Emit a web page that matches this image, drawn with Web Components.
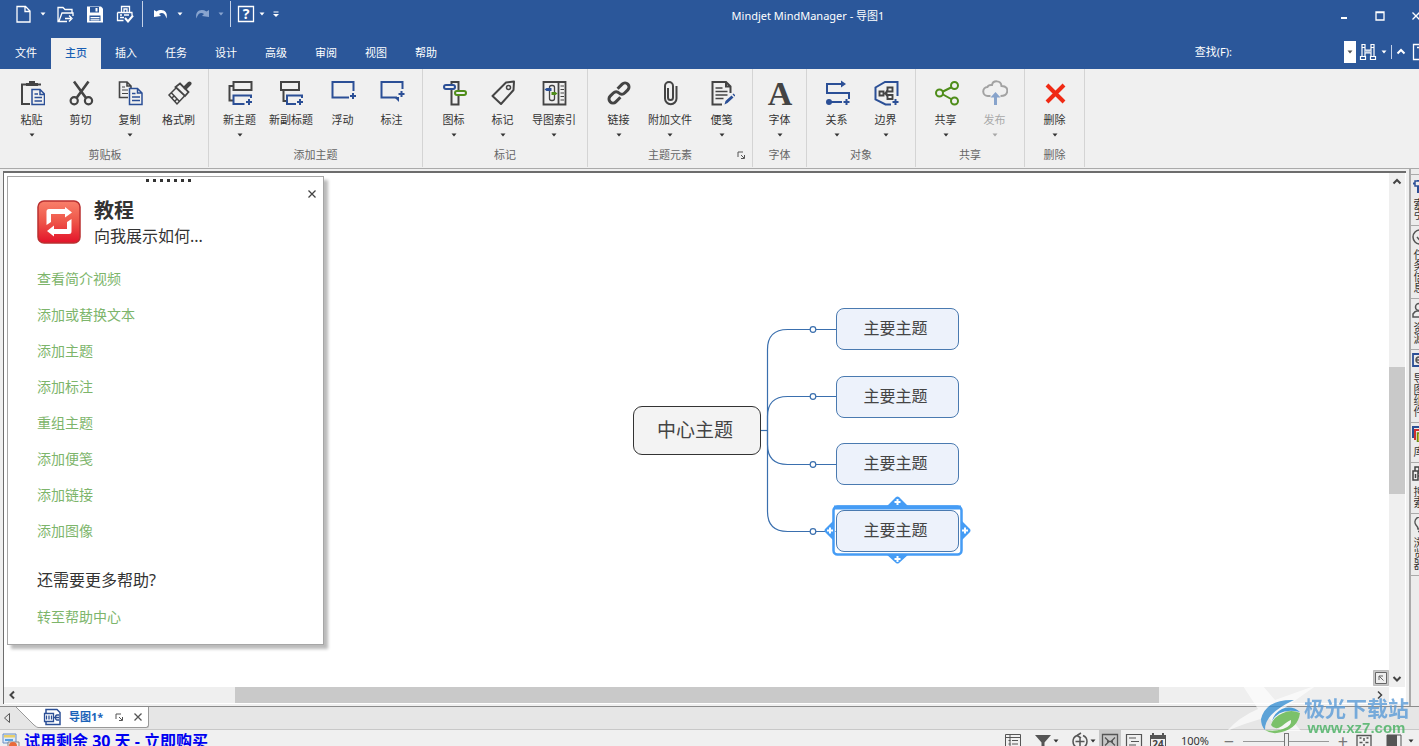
<!DOCTYPE html>
<html lang="zh-CN">
<head>
<meta charset="utf-8">
<title>Mindjet MindManager - 导图1</title>
<style>
  html, body { margin: 0; height: 100%; overflow: hidden; }
  body { font: 11px/16px "Noto Sans", "Noto Sans CJK SC", sans-serif; color: #333; background: #f0f0f0; }
</style>
</head>
<body>
<mm-shell></mm-shell>

<script>
const base = `*{box-sizing:border-box}button{font:inherit;color:inherit;background:none;border:0;padding:0;margin:0}a{text-decoration:none;color:inherit}`;

class Part extends HTMLElement {
  connectedCallback() {
    if (this.shadowRoot) return;
    const t = document.createElement('template');
    t.innerHTML = `<style>${base}${this.styles()}</style>${this.markup()}`;
    this.attachShadow({ mode: 'open' }).append(t.content.cloneNode(true));
  }
  styles() { return ':host{display:block}'; }
  markup() { return '<slot></slot>'; }
}

const K = '#444', B = '#2b4f96', G = '#4f8d1a';
const plus = (x, y, c = B) => `<path d="M${x - 3} ${y}h6M${x} ${y - 3}v6" stroke="${c}" stroke-width="2"/>`;

/* name: [view box size, drawing] */
const icons = {
  /* quick access */
  new: [18, `<path d="M2 1.500h8.500l4.500 4.500v11H2zM10 2v4.500h4.500" stroke="#fff" stroke-width="1.300"/>`],
  open: [18, `<path d="M3 16.500H2V2.500h5l2 2h7v3M3 16l3-8h11v3M3 16.500h8M9 13.500h6M13 10.500l3 3-3 3" stroke="#fff" stroke-width="1.300"/>`],
  save: [18, `<path d="M1 1.500h14l2 2v14H1z" fill="#fff"/><path d="M4 2h9v5.500H4zM3.500 10.500h11V16h-11z" fill="#2b579a"/><path d="M9.500 3h2v3.500h-2zM4.500 12h9v1.200h-9zM4.500 14.200h9v1.200h-9z" fill="#fff"/>`],
  print: [18, `<path d="M5.500 7V1.500h8V7M8 7V4h3v3M1.500 7.500h15M1.500 7.500v8h6M16 7.500v3M4 10h2M4 12.500h4M8 10h5" stroke="#fff" stroke-width="1.300"/><path d="M9 13l3 3.500 5-6" stroke="#fff" stroke-width="2"/>`],
  undo: [18, `<path d="M2 5v7l7-1-2-2c3-2 6-1 7.500 4.500C16.500 6 10 3 4.500 6.500z" fill="#fff"/>`],
  redo: [18, `<path d="M16 5v7l-7-1 2-2c-3-2-6-1-7.500 4.500C1.500 6 8 3 13.500 6.500z" fill="#88a4cf"/>`],
  help: [18, `<path d="M1.500 1.500h15v15h-15z" stroke="#fff" stroke-width="1.300"/><text x="9" y="14" text-anchor="middle" font-family="Noto Sans" font-weight="bold" font-size="14" fill="#fff">?</text>`],
  customize: [8, `<path d="M1.500 2h5" stroke="#fff"/><path d="M1 4h6L4 7z" fill="#fff"/>`],
  down: [8, `<path d="M1.500 2.500h5l-2.500 3z" fill="currentColor"/>`],
  min: [12, `<path d="M3 8h6" stroke="#fff" stroke-width="2"/>`],
  max: [12, `<path d="M2 2h8v8H2zM2 2.500h8" stroke="#fff" stroke-width="1.300"/>`],
  close: [12, `<path d="M2.500 2.500l7 7M9.500 2.500l-7 7" stroke="currentColor" stroke-width="1.300"/>`],
  find: [18, `<path d="M3 1.500h3v3H3zM12 1.500h3v3h-3zM3 4.500v9M6 4.500v9M12 4.500v9M15 4.500v9M6 7h6M6 10h6M1.500 13.500h5v3h-5zM11.500 13.500h5v3h-5zM8 7v3M10 7v3" stroke="#fff" stroke-width="1.200"/>`],
  up: [12, `<path d="M2.500 7.500L6 4l3.500 3.500" stroke="currentColor" stroke-width="2"/>`],
  panel: [18, `<path d="M1.500 1.500h15v15h-15zM5 4.500h4" stroke="#fff" stroke-width="1.300"/>`],
  /* ribbon */
  paste: [26, `<path d="M9 4.500H3V24h8M17 4.500h5" stroke="${K}" stroke-width="2"/><path d="M7 5V3h3V1h6v2h3v3H7z" fill="${K}"/><path d="M13 9.500h8l4.500 4.500v10.500H13zM21 10v4.500h4" stroke="${B}" stroke-width="1.500"/><path d="M15.500 14h3.500M15.500 17.500H23M15.500 21H23" stroke="${B}" stroke-width="1.300"/>`],
  cut: [26, `<path d="M6 1.500L18 18M20.500 1.500L8.500 18" stroke="${K}" stroke-width="2.600"/><circle cx="6.200" cy="20.800" r="3.600" stroke="${K}" stroke-width="2.200"/><circle cx="20.500" cy="20.800" r="3.600" stroke="${K}" stroke-width="2.200"/>`],
  copy: [26, `<path d="M11 17.500H2.500V2h7.500l4 4v2M10 2v4h4" stroke="${K}" stroke-width="1.600"/><path d="M5 7h3M5 10h6M5 13.500h6" stroke="${K}"/><path d="M12.500 8.500h8L25 13v11.500H12.500zM20.500 9v4h4" stroke="${B}" stroke-width="1.500"/><path d="M15 13.500h3.500M15 17h8M15 20.500h8" stroke="${B}" stroke-width="1.300"/>`],
  brush: [26, `<path d="M19.500 7.500l4-4" stroke="${K}" stroke-width="4" stroke-linecap="round"/><path d="M14 3.500l8.500 8.500-3.500 4-9.500-9z" stroke="${K}" stroke-width="1.800"/><path d="M10.500 7.500L3 15l8 9 7.500-8M5.500 13l8 8.500M6 18l2-2M9 21l2-2" stroke="${K}" stroke-width="1.500"/>`],
  topic: [26, `<path d="M6.500 2h18v8h-18zM6.500 6h-4v14.500h4" stroke="${K}" stroke-width="2"/><path d="M24 18v-2.500H6.500V24h11" stroke="${B}" stroke-width="2"/>${plus(22, 22)}`],
  subtopic: [26, `<path d="M3 2h18v8H3zM5.500 10v11h3" stroke="${K}" stroke-width="2"/><path d="M24 18v-2.500H9V24h9" stroke="${B}" stroke-width="2"/>${plus(22, 22)}`],
  floating: [26, `<path d="M23.500 11V2H2.500v15.500H19" stroke="${B}" stroke-width="2"/>${plus(23, 16)}`],
  callout: [26, `<path d="M23.500 9V2H2.500v15.500H18" stroke="${B}" stroke-width="2"/><path d="M15 17h5v5z" fill="${B}"/>${plus(22.500, 14)}`],
  marker: [26, `<path d="M10.500 2h7v22.500h-7z" stroke="${K}" stroke-width="2"/><rect x="3" y="5" width="11" height="4" rx="2" fill="#f0f0f0" stroke="${B}" stroke-width="2"/><rect x="14" y="11" width="11" height="4" rx="2" fill="#f0f0f0" stroke="${G}" stroke-width="2"/>`],
  tag: [26, `<path d="M16 2.500l8-1-.500 8.500L11 24l-8.500-8z" stroke="${K}" stroke-width="2" stroke-linejoin="round"/><circle cx="18.500" cy="7.500" r="2" stroke="${K}" stroke-width="1.500"/>`],
  index: [26, `<path d="M2.500 2h22v22.500h-22zM17.500 2v22.500" stroke="${K}" stroke-width="1.800"/><path d="M19.500 6h3.500M19.500 9.500h3.500M19.500 13h3.500M19.500 16.500h3.500M19.500 20h3.500" stroke="${K}"/><rect x="8.500" y="5.500" width="5" height="15" rx="2" stroke="${K}" stroke-width="1.300"/><path d="M3.500 9.500l2-1.500h5v3h-5z" fill="${B}"/><path d="M16.500 13.500l-2-1.500h-4v3h4z" fill="${G}"/>`],
  link: [26, `<g transform="rotate(-45 13 13)" stroke="${K}" stroke-width="3"><path d="M11 17H4.500a4 4 0 0 1 0-8H9a4 4 0 0 1 4 4M15 9h6.500a4 4 0 0 1 0 8H17a4 4 0 0 1-4-4"/></g>`],
  clip: [26, `<path d="M11 8v9.500a2.500 2.500 0 0 0 5 0V6a4 4 0 0 0-8 0v12.500a5.500 5.500 0 0 0 11.500 0V6" stroke="${K}" stroke-width="2"/>`],
  note: [26, `<path d="M13 24.500H3.500V2H17l4.500 4.500V13M17 2v4.500h4.500" stroke="${K}" stroke-width="2"/><path d="M6.500 8h7M6.500 11.500h12M6.500 15h12M6.500 18.500h8" stroke="${K}" stroke-width="1.400"/><path d="M15.500 24.500l1-3.500 6-5.500 2 2-6 5.500zM23.500 14.500l1-1 2 2-1 1z" fill="${B}"/>`],
  font: [26, `<text x="13" y="25" text-anchor="middle" font-family="Liberation Serif" font-weight="bold" font-size="34" fill="${K}">A</text>`],
  relation: [26, `<path d="M18 4H3v9h22v6M5 22h13" stroke="${B}" stroke-width="2"/><path d="M17 .500l5 3.500-5 3.500z" fill="${B}"/><circle cx="5" cy="22" r="3" fill="${B}"/>${plus(22.500, 22)}`],
  boundary: [26, `<path d="M24.500 16V2H12L2.500 7.500v12l10 5H18" stroke="${B}" stroke-width="2"/><path d="M6.500 11.500h4v4h-4zM14.500 7.500h5v4h-5zM14.500 15h5v4h-5zM10.500 13.500h4M14.500 10l-2 3.500 2 3" stroke="${K}" stroke-width="1.900"/>${plus(22.500, 22)}`],
  share: [26, `<path d="M10 11.500L19 7M10 14.500l9 5" stroke="${G}" stroke-width="2"/><circle cx="6.500" cy="13" r="3.500" stroke="${G}" stroke-width="2"/><circle cx="21.500" cy="5.500" r="3.500" stroke="${G}" stroke-width="2"/><circle cx="21.500" cy="21" r="3.500" stroke="${G}" stroke-width="2"/>`],
  publish: [26, `<path d="M8.500 16H6a4.500 4.500 0 0 1-.500-9C6.500 4.500 9 5 10 5c1-5 9-5 9.500 1 5 0 6.500 3 5.500 6.500C24 16 21 16 18.500 16" stroke="#a2a2a2" stroke-width="2"/><path d="M8.500 17.500L13.500 12l5 5.500H15V25h-3v-7.500z" fill="#87a3cb"/>`],
  remove: [26, `<path d="M5 5l17 17M22 5L5 22" stroke="#f02a14" stroke-width="4"/>`],
  launcher: [10, `<path d="M2 7V2h5" stroke="#555"/><path d="M5 5l3 3M8.500 5v3.500H5" stroke="#555"/>`],
  /* tutorial, tabs */
  loop: [44, `<defs><linearGradient id="r" x2="0" y2="1"><stop offset="0" stop-color="#f9806a"/><stop offset=".5" stop-color="#ee5448"/><stop offset="1" stop-color="#e3122a"/></linearGradient></defs><rect x="1" y="1" width="42" height="42" rx="6" fill="url(#r)" stroke="#b93030" stroke-width="1.500"/><path d="M9.500 25V11.500q0-2.500 2.500-2.500h16V7l7 5.500-7 5V14H14v8zM34.500 19v12.500q0 2.500-2.500 2.500H17v2.500L10 31l7-5.500V29h13v-7z" fill="#fff"/>`],
  map: [18, `<path d="M3 5V1.500h11l3 3v12H3V14" stroke="${B}" stroke-width="1.500"/><path d="M1.500 5.500h9v8h-9zM3.500 7.500v4M6 7.500v4M8.500 7.500v4M10.500 9.500h2M16 7h-2q-1.500 0-1.500 2.500T14 12h2M13 9.500h3" stroke="${B}" stroke-width="1.300"/>`],
  prev: [12, `<path d="M8.500 1.500v9L3.500 6z" stroke="#555"/>`],
  left: [12, `<path d="M8 2.500L4.500 6 8 9.500" stroke="currentColor" stroke-width="2"/>`],
  right: [12, `<path d="M4 2.500L7.500 6 4 9.500" stroke="currentColor" stroke-width="1.500"/>`],
  chevdown: [12, `<path d="M2.500 4L6 7.500 9.500 4" stroke="currentColor" stroke-width="2"/>`],
  corner: [16, `<path d="M.500.500h15v15H.500z" fill="#c8c8c8" stroke="#bbb"/><path d="M2.500 2.500h11v11h-11z" fill="#eee" stroke="#666"/><path d="M6 10V6h4M6 6l4.500 4.500" stroke="#666"/>`],
  /* side panels */
  s1: [16, `<path d="M1 5.500h13M6 2v13" stroke="${B}" stroke-width="2"/><path d="M3 3h6v5H3z" fill="#ececec" stroke="${B}" stroke-width="1.500"/>`],
  s2: [16, `<circle cx="8" cy="8" r="7" stroke="#555" stroke-width="1.500"/><path d="M5 8l2.500 3L14 4" stroke="#555" stroke-width="1.500"/>`],
  s3: [16, `<circle cx="7" cy="5" r="3.500" stroke="#555" stroke-width="1.500"/><path d="M1 15v-3q2-3 4-3h4q4 0 5 6z" stroke="#555" stroke-width="1.500"/>`],
  s4: [16, `<path d="M1 1h14v12H1z" stroke="${B}" stroke-width="1.800"/><path d="M4 7h8M4 7q0-3 4-3M4 7q0 3 4 3" stroke="#555" stroke-width="1.500"/>`],
  s5: [16, `<path d="M1 12V1h12" stroke="${B}" stroke-width="2"/><path d="M3 14V4h12" stroke="#d03030" stroke-width="2"/><path d="M5.500 7H15v9H5.500z" fill="#d8c840" stroke="#6b8b14" stroke-width="1.500"/>`],
  s6: [16, `<path d="M3 1h4v4H3zM10 1h4v4h-4zM1 5h5v9H1zM10 5h5v9h-5zM6 7h4M6 10h4M3.500 8v4" stroke="#444" stroke-width="1.500"/>`],
  s7: [16, `<path d="M6 12q0-2-2-4a5 5 0 1 1 8 0q-2 2-2 4zM6 14.500h4" stroke="#555" stroke-width="1.500"/>`],
  /* status bar */
  cart: [18, `<path d="M1 2h13v9H1z" fill="#dce9fa" stroke="#6a8fc4"/><path d="M2 3h11v2.500H2z" fill="#e8cf6a"/><path d="M3 8h8" stroke="#58a0e0" stroke-width="2"/><path d="M6 10h11v8H6z" fill="#eee" stroke="#888"/><circle cx="11" cy="14" r="4" fill="#ea6a3a"/>`],
  outline: [18, `<path d="M1.500 2.500h15v14h-15zM1.500 5.500h15M4.500 8.500h2M8 8.500h6M4.500 12h2M8 12h6M6 2.500v14" stroke="#555"/>`],
  filter: [18, `<path d="M1 3h16l-6.500 7.500V18l-3-2v-5.500z" fill="#555"/>`],
  target: [18, `<path d="M6 3.500a6.500 6.500 0 0 0 0 12M12 3.500a6.500 6.500 0 0 1 0 12M9 5v9M4.500 9.500h9M6 3.500l4-2.500M6 3.500l4 2.500" stroke="#555" stroke-width="1.500"/>`],
  mapview: [18, `<path d="M1.500 2.500h15v14h-15zM4 5.500l4 4M14 5.500l-4 4M4 13.500l4-4M14 13.500l-4-4M6 9.500h6" stroke="#555" stroke-width="1.300"/>`],
  rows: [18, `<path d="M1.500 2.500h15v14h-15zM4 6h7M6 9.500h8M4 13h7" stroke="#555" stroke-width="1.200"/>`],
  calendar: [18, `<path d="M1.500 3.500h15v14h-15z" stroke="#555"/><path d="M1 3h16v4H1zM3 1h2v3H3zM13 1h2v3h-2z" fill="#555"/><text x="9" y="16" text-anchor="middle" font-family="Noto Sans" font-weight="bold" font-size="10" fill="#444">24</text>`],
  fit: [18, `<path d="M2 3.500h14v14H2z" stroke="#555" stroke-width="1.300"/><path d="M9 6v3M9 12v3M4.500 10.500h3M10.500 10.500h3M4.500 6h2M11.500 6h2" stroke="#555" stroke-width="1.500"/>`],
  task: [18, `<path d="M2 3h14v14H2z" stroke="#555"/><path d="M2 3h10v14H2z" fill="#555"/>`],
};

class MmIcon extends Part {
  styles() { return ':host{display:block;flex:none}svg{display:block;fill:none}'; }
  markup() {
    const [s, d] = icons[this.getAttribute('name')];
    return `<svg width="${s}" height="${s}" viewBox="0 0 ${s} ${s}" fill="none" aria-hidden="true">${d}</svg>`;
  }
}

/* Small icon-only button: width is taken from --w. */
class MmIconButton extends Part {
  styles() { return ':host{display:block;flex:none}button{display:grid;place-items:center;width:var(--w,30px);height:var(--h,24px)}'; }
  markup() { return `<button type="button" aria-label="${this.getAttribute('label')}"><mm-icon name="${this.getAttribute('icon')}"></mm-icon></button>`; }
}

class MmTitlebar extends Part {
  styles() { return `:host{display:flex;align-items:center;height:28px;padding-left:9px;color:#fff}
    .s{--w:8px}.gap{margin-right:3px}.help{--w:24px}.custom{--w:12px;margin:0 8px 0 4px}
    i{width:1px;height:26px;background:#c5d2e8;margin:0 3px 0 2px}
    .dim{color:#88a4cf}h1{flex:1;margin:4px 0 0;font:inherit;text-align:center;white-space:nowrap}.win{--w:36px;--h:32px;margin-top:4px}`; }
  markup() { return `
    <mm-icon-button icon="new" label="新建"></mm-icon-button><mm-icon-button class="s gap" icon="down" label="新建选项"></mm-icon-button>
    <mm-icon-button icon="open" label="打开"></mm-icon-button><mm-icon-button icon="save" label="保存"></mm-icon-button><mm-icon-button icon="print" label="打印"></mm-icon-button><i></i>
    <mm-icon-button icon="undo" label="撤消"></mm-icon-button><mm-icon-button class="s gap" icon="down" label="撤消列表"></mm-icon-button>
    <mm-icon-button icon="redo" label="恢复"></mm-icon-button><mm-icon-button class="s gap dim" icon="down" label="恢复列表"></mm-icon-button><i></i>
    <mm-icon-button class="help" icon="help" label="帮助"></mm-icon-button><mm-icon-button class="s" icon="down" label="帮助选项"></mm-icon-button>
    <mm-icon-button class="custom" icon="customize" label="自定义"></mm-icon-button>
    <h1>Mindjet MindManager - 导图1</h1>
    <mm-icon-button class="win" icon="min" label="最小化"></mm-icon-button><mm-icon-button class="win" icon="max" label="最大化"></mm-icon-button><mm-icon-button class="win" icon="close" label="关闭"></mm-icon-button>`; }
}

class MmTabs extends Part {
  styles() { return `:host{display:flex;align-items:flex-end;height:41px;color:#fff}
    nav{display:flex;flex:1;padding-left:1px}nav button{width:50px;height:31px;padding-bottom:2px;text-align:center}nav .on{background:#f0f0f0;color:#1a5fb4;font-weight:500}
    form{display:flex;align-items:center;height:34px}
    label{margin-right:6px}input{width:106px;height:22px;border:0;padding:0 4px;background:#2b579a;color:#fff;font:inherit}
    .drop{--w:12px;--h:22px;background:#fff;color:#555}.find{--w:24px}.s{--w:8px;margin-right:3px}i{width:1px;height:14px;background:#c5d2e8;margin-right:2px}
    .up{--w:14px}.panel{--w:26px}`; }
  markup() { return `<nav>${['文件', '主页', '插入', '任务', '设计', '高级', '审阅', '视图', '帮助'].map((t, i) => `<button type="button"${i === 1 ? ' class="on"' : ''}>${t}</button>`).join('')}</nav>
    <form><label for="q">查找(F):</label><input id="q" type="text"><mm-icon-button class="drop" icon="down" label="历史"></mm-icon-button>
    <mm-icon-button class="find" icon="find" label="查找"></mm-icon-button><mm-icon-button class="s" icon="down" label="查找选项"></mm-icon-button><i></i>
    <mm-icon-button class="up" icon="up" label="折叠功能区"></mm-icon-button><mm-icon-button class="panel" icon="panel" label="窗格"></mm-icon-button></form>`; }
}

class MmTool extends Part {
  styles() { return `:host{display:block}button{display:flex;flex-direction:column;align-items:center;min-width:49px;height:72px;padding-top:11px;white-space:nowrap}
    :host([wide]) button{min-width:54px}:host([disabled]) button{color:#a8a8a8}span{margin:6px 0 3px;line-height:16px}`; }
  markup() { return `<button type="button"${this.hasAttribute('disabled') ? ' disabled' : ''}><mm-icon name="${this.getAttribute('icon')}"></mm-icon><span><slot></slot></span>${this.hasAttribute('menu') ? '<mm-icon name="down"></mm-icon>' : ''}</button>`; }
}

class MmGroup extends Part {
  styles() { return `:host{display:grid;grid-template-rows:77px 18px;height:98px;padding:0 var(--pad,6px);border-right:1px solid #d4d4d4}
    .tools{display:flex}footer{position:relative;color:#666;text-align:center;line-height:18px}mm-icon{position:absolute;right:0;top:4px}`; }
  markup() { return `<div class="tools"><slot></slot></div><footer>${this.getAttribute('name')}${this.hasAttribute('launcher') ? '<mm-icon name="launcher"></mm-icon>' : ''}</footer>`; }
}

class MmRibbon extends Part {
  styles() { return ':host{display:flex;height:100px;background:#f0f0f0;border-bottom:1px solid #aaa}.p5{--pad:5px}.p2{--pad:2px}.p7{--pad:5px 0 7px}'; }
  markup() { return `
    <mm-group class="p7" name="剪贴板"><mm-tool icon="paste" menu>粘贴</mm-tool><mm-tool icon="cut">剪切</mm-tool><mm-tool icon="copy" menu>复制</mm-tool><mm-tool icon="brush">格式刷</mm-tool></mm-group>
    <mm-group name="添加主题"><mm-tool icon="topic" menu>新主题</mm-tool><mm-tool icon="subtopic" wide>新副标题</mm-tool><mm-tool icon="floating">浮动</mm-tool><mm-tool icon="callout">标注</mm-tool></mm-group>
    <mm-group name="标记"><mm-tool icon="marker" menu>图标</mm-tool><mm-tool icon="tag" menu>标记</mm-tool><mm-tool icon="index" wide menu>导图索引</mm-tool></mm-group>
    <mm-group name="主题元素" launcher><mm-tool icon="link" menu>链接</mm-tool><mm-tool icon="clip" wide menu>附加文件</mm-tool><mm-tool icon="note" menu>便笺</mm-tool></mm-group>
    <mm-group class="p2" name="字体"><mm-tool icon="font" menu>字体</mm-tool></mm-group>
    <mm-group class="p5" name="对象"><mm-tool icon="relation" menu>关系</mm-tool><mm-tool icon="boundary" menu>边界</mm-tool></mm-group>
    <mm-group class="p5" name="共享"><mm-tool icon="share" menu>共享</mm-tool><mm-tool icon="publish" menu disabled>发布</mm-tool></mm-group>
    <mm-group class="p5" name="删除"><mm-tool icon="remove" menu>删除</mm-tool></mm-group>`; }
}

/* Floating tutorial panel that lies over the canvas. */
class MmTutorial extends Part {
  styles() { return `:host{display:block;width:317px;background:#fff;border:1px solid #a6a6a6;box-shadow:4px 4px 3px #bbb;padding:0 29px 17px}
    .grip{width:46px;height:3px;margin:2px 0 0 109px;background:repeating-linear-gradient(90deg,#333 0 3px,transparent 3px 7px)}
    .x{position:absolute;right:1px;top:5px;--w:20px;color:#444}
    header{display:flex;gap:13px;margin-top:18px}h2{margin:-3px 0 0;font-size:20px;line-height:28px}p{margin:0;font-size:16px;line-height:22px}
    ul{list-style:none;margin:22px 0 0;padding:0;display:grid;gap:16px}a{color:#7db56b;font-size:14px;line-height:20px;display:block}
    p.more{margin:27px 0 15px;line-height:24px}`; }
  markup() { return `<div class="grip"></div><mm-icon-button class="x" icon="close" label="关闭教程"></mm-icon-button>
    <header><mm-icon name="loop"></mm-icon><div><h2>教程</h2><p>向我展示如何...</p></div></header>
    <ul>${['查看简介视频', '添加或替换文本', '添加主题', '添加标注', '重组主题', '添加便笺', '添加链接', '添加图像'].map(t => `<li><a href="#">${t}</a></li>`).join('')}</ul>
    <p class="more">还需要更多帮助?</p><a href="#">转至帮助中心</a>`; }
}

class MmTopic extends Part {
  styles() { return `:host{position:absolute;display:grid;place-items:center;width:123px;height:42px;padding:0 3px 2px 0;border:1px solid #4a7ab0;border-radius:8px;background:#edf2fb;font-size:16px;line-height:22px;color:#444}
    :host([central]){width:128px;height:49px;border-color:#333;border-radius:9px;background:#f3f3f3;font-size:19px}`; }
}

/* The origin of the map is the middle of the central topic. */
class MmMap extends Part {
  styles() { return `:host{position:absolute;left:50%;top:50%;width:0;height:0}
    svg{position:absolute;left:0;top:-150px;fill:none}.c{left:-64px;top:-24px}.t{left:139px}
    .a{top:-122px}.b{top:-54px}.d{top:13px}.e{top:80px}`; }
  markup() {
    const line = y => `<path d="M70.500 150V${y < 150 ? y + 20 : y - 20}Q70.500 ${y} 90.500 ${y}H139"/><circle cx="116" cy="${y}" r="2.800" fill="#fff"/>`;
    const add = (x, y) => `<path d="M${x - 3} ${y}h6M${x} ${y - 3}v6" stroke="#fff" stroke-width="2"/>`;
    return `<svg width="290" height="300" stroke="#3a6fae" stroke-width="1.200"><path d="M64 150.500h6.500"/>${[49.5, 116.5, 184.5, 251.5].map(line).join('')}</svg>
    <mm-topic class="c" central>中心主题</mm-topic>
    <mm-topic class="t a">主要主题</mm-topic><mm-topic class="t b">主要主题</mm-topic><mm-topic class="t d">主要主题</mm-topic><mm-topic class="t e">主要主题</mm-topic>
    <svg width="290" height="300"><rect x="137.500" y="228.500" width="126" height="45" rx="4" stroke="#fff" stroke-width="2"/>
      <rect x="136.500" y="226.500" width="128" height="48" rx="4" stroke="#459cf5" stroke-width="2.500"/><path d="M137 227.500h127" stroke="#459cf5" stroke-width="4"/>
      <g fill="#459cf5"><path d="M189 227l10-10q1.500-1 3 0l10 10zM189 274l10 9q1.500 1 3 0l10-9zM137 240l-9 9q-1 1.500 0 3l9 9zM264 240l9 9q1 1.500 0 3l-9 9z"/></g>
      ${add(200.5, 222)}${add(200.5, 279)}${add(133, 250.5)}${add(268, 250.5)}</svg>`;
  }
}

class MmCanvas extends Part {
  styles() { return `:host{display:grid;grid-template:minmax(0,1fr) 17px / minmax(0,1fr) 17px;background:#fff;border:solid #6d6d6d;border-width:2px 0 0 1px;min-width:0}
    .view{position:relative;overflow:hidden}mm-tutorial{position:absolute;left:3px;top:3px}
    .corner{position:absolute;right:0;bottom:1px}
    .v,.h{display:flex;background:#efefef;color:#444}.v{flex-direction:column;width:16px;padding:3px 0 2px;align-items:center}.h{align-items:center;padding:0 3px 0 2px;height:16px}
    .v b{width:16px;height:127px;background:#c9c9c9}.h b{width:67%;height:16px;background:#c9c9c9}
    .v i{flex:179}.v i.n{flex:180}.h i{flex:215}.h i.n{flex:213}`; }
  markup() { return `<div class="view"><mm-map></mm-map><mm-tutorial></mm-tutorial><mm-icon class="corner" name="corner"></mm-icon></div>
    <div class="v"><mm-icon name="up"></mm-icon><i></i><b></b><i class="n"></i><mm-icon name="chevdown"></mm-icon></div>
    <div class="h"><mm-icon name="left"></mm-icon><i></i><b></b><i class="n"></i><mm-icon name="right"></mm-icon></div>`; }
}

class MmSide extends Part {
  styles() { return `:host{display:block;padding-top:5px;border-left:2px solid #aaa;background:#ececec}
    button{display:flex;flex-direction:column;align-items:flex-start;width:100%;gap:4px;padding:3px 0 5px 1px;border-top:1px solid #aaa}
    button:last-child{border-bottom:1px solid #aaa}
    span{writing-mode:vertical-rl;text-orientation:upright;line-height:12px}`; }
  markup() { return ['索引', '任务信息', '资源', '导图组件', '库', '搜索', '浏览器'].map((t, i) => `<button type="button"><mm-icon name="s${i + 1}"></mm-icon><span>${t}</span></button>`).join(''); }
}

class MmDocTabs extends Part {
  styles() { return `:host{display:flex;height:24px;background:#e6e6e6;border-top:1px solid #8c8c8c;border-bottom:1px solid #c8c8c8;align-items:flex-start}
    .prev{--w:14px;--h:22px}svg{display:block;flex:none}
    .tab{display:flex;align-items:center;height:21px;padding:0 1px 0 5px;background:#fff;border:solid #999;border-width:0 1px 1px 0;border-radius:0 0 3px 0;color:#555}
    a{margin:0 6px 0 8px;color:#1a62b8;font-weight:bold}.x{--w:19px;--h:20px}`; }
  markup() { return `<mm-icon-button class="prev" icon="prev" label="上一个"></mm-icon-button>
    <svg width="24" height="21"><path d="M2 0l18 18q3 2.500 4 2.500V0z" fill="#fff"/><path d="M2 0l18 18q3 2.500 4 2.500" fill="none" stroke="#999"/></svg>
    <div class="tab"><mm-icon name="map"></mm-icon><a href="#">导图1*</a><mm-icon-button class="x" icon="launcher" label="还原"></mm-icon-button><mm-icon-button class="x" icon="close" label="关闭"></mm-icon-button></div>`; }
}

class MmStatus extends Part {
  styles() { return `:host{display:flex;align-items:center;height:22px;padding:0 19px 0 2px;background:#f0f0f0}
    .buy{display:flex;align-items:center;gap:4px;margin-right:auto;font-size:16px;font-weight:bold;color:#0000f0;line-height:20px}
    .i{--w:22px;margin-right:2px}.f,.g{--w:18px;--h:22px}.s{--w:8px;color:#333}.f{margin-left:8px}.g{margin-left:11px}.on{margin-left:2px;background:#c8c8c8}
    output{margin:0 10px}button{width:20px;font-size:18px;line-height:20px;color:#777}
    input{appearance:none;width:86px;height:20px;margin:0 4px;background:linear-gradient(#999,#999) center/100% 1px no-repeat}
    input::-webkit-slider-thumb{appearance:none;width:5px;height:17px;background:#eee;border:1px solid #777}.w{--w:22px;margin-right:8px}`; }
  markup() { return `<a class="buy" href="#"><mm-icon name="cart"></mm-icon><span>试用剩余 30 天 - 立即购买</span></a>
    <mm-icon-button class="i" icon="outline" label="大纲"></mm-icon-button>
    <mm-icon-button class="f" icon="filter" label="筛选"></mm-icon-button><mm-icon-button class="s" icon="down" label="筛选选项"></mm-icon-button>
    <mm-icon-button class="g" icon="target" label="定位"></mm-icon-button><mm-icon-button class="s" icon="down" label="定位选项"></mm-icon-button>
    <mm-icon-button class="i on" icon="mapview" label="导图视图"></mm-icon-button><mm-icon-button class="i" icon="rows" label="大纲视图"></mm-icon-button><mm-icon-button class="i" icon="calendar" label="日程"></mm-icon-button>
    <output>100%</output><button type="button" aria-label="缩小">−</button><input type="range" aria-label="缩放" min="0" max="200" value="100"><button type="button" aria-label="放大">+</button>
    <mm-icon-button class="w" icon="fit" label="适合"></mm-icon-button><mm-icon-button class="i" icon="task" label="任务窗格"></mm-icon-button><mm-icon-button class="s" icon="down" label="窗格选项"></mm-icon-button>`; }
}

/* Download-site mark that floats over the lower right corner. */
class MmMark extends Part {
  styles() { return `:host{position:fixed;right:10px;bottom:9px;display:flex;align-items:center;gap:2px;pointer-events:none;opacity:.8}
    .x{position:absolute;right:74px;bottom:4px}svg{display:block;position:relative}div{position:relative}
    b{display:block;font-size:21px;line-height:22px;font-weight:bold;color:#5b9bd8}small{display:block;font:bold 15px/18px "Liberation Sans",sans-serif;color:#45b060;text-align:center}`; }
  markup() { return `<svg class="x" width="110" height="52" viewBox="0 0 110 52"><path d="M18 5h20l12 14L92 4 58 28l18 22H56L43 36Q20 42 2 50q12-14 31-22z" fill="#fff" opacity=".8"/></svg>
    <svg width="42" height="36" viewBox="0 0 42 36"><path d="M34 1Q6 0 1 20q0 7 4 11Q4 15 34 1z" fill="#3a92d4"/><path d="M5 31q7 5 17 2 16-4 18-19-9-4-17 0-10 4-12 12 4 6 11 1 6-5 9-6 1 6-8 9-9 3-18 1z" fill="#61b84c"/><path d="M12 22Q20 8 40 13q-8-7-18-3-8 4-10 12z" fill="#268bd2"/></svg>
    <div><b>极光下载站</b><small>www.xz7.com</small></div>`; }
}

/* The application window is a little larger than the screen, so its right and bottom edges run off it. */
class MmShell extends Part {
  styles() { return `:host{display:grid;grid-template-rows:auto auto auto minmax(0,1fr) auto auto;width:calc(100% + 15px);height:calc(100vh + 6px)}
    .head{background:#2b579a}main{display:grid;grid-template-columns:minmax(0,1fr) 25px;min-height:0}
    mm-canvas{margin:2px 3px 2px 3px}`; }
  markup() { return `<mm-titlebar class="head"></mm-titlebar><mm-tabs class="head"></mm-tabs><mm-ribbon></mm-ribbon>
    <main><mm-canvas></mm-canvas><mm-side></mm-side></main><mm-doc-tabs></mm-doc-tabs><mm-status></mm-status><mm-mark></mm-mark>`; }
}

Object.entries({ 'mm-icon': MmIcon, 'mm-icon-button': MmIconButton, 'mm-titlebar': MmTitlebar, 'mm-tabs': MmTabs, 'mm-tool': MmTool, 'mm-group': MmGroup, 'mm-ribbon': MmRibbon, 'mm-tutorial': MmTutorial, 'mm-topic': MmTopic, 'mm-map': MmMap, 'mm-canvas': MmCanvas, 'mm-side': MmSide, 'mm-doc-tabs': MmDocTabs, 'mm-status': MmStatus, 'mm-mark': MmMark, 'mm-shell': MmShell })
  .forEach(([name, type]) => customElements.define(name, type));
</script>
</body>
</html>
